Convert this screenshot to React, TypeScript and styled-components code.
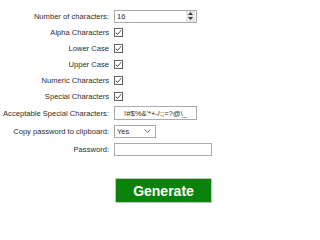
import * as React from 'react';
import styled, { createGlobalStyle } from 'styled-components';

const GlobalStyle = createGlobalStyle`
  html, body {
    margin: 0;
    padding: 0;
    background: #ffffff;
  }
  body {
    font-family: 'Liberation Sans', Arial, sans-serif;
  }
`;

const Form = styled.div`
  width: 223px;
  height: 213px;
  box-sizing: border-box;
  padding-top: 8px;
  display: grid;
  grid-template-columns: 110px 1fr;
  grid-template-rows: 16px 16px 16px 16px 16px 16px 18px 18px 19px;
  column-gap: 4px;
  align-items: center;
  align-content: start;
  background: #ffffff;
`;

const Label = styled.div`
  font-size: 7.6px;
  color: #2b2b2b;
  text-align: right;
  white-space: nowrap;
  padding-right: 1px;
`;

const Field = styled.div<{ width: number; height?: number }>`
  width: ${(p) => p.width}px;
  height: ${(p) => p.height ?? 13}px;
  box-sizing: border-box;
  border: 1px solid #ababab;
  background: #ffffff;
  display: flex;
  align-items: center;
  font-size: 7.6px;
  color: #2b2b2b;
`;

const FieldText = styled.span<{ center?: boolean }>`
  flex-grow: 1;
  padding-left: ${(p) => (p.center ? 0 : 2)}px;
  text-align: ${(p) => (p.center ? 'center' : 'left')};
  white-space: nowrap;
  overflow: hidden;
`;

const Spinner = styled.div`
  width: 9px;
  height: 11px;
  margin-right: 1px;
  background: #e6e6e6;
  display: flex;
  flex-direction: column;
  align-items: center;
  justify-content: space-evenly;
`;

const Chevron = styled.span`
  width: 10px;
  display: flex;
  justify-content: center;
  margin-right: 3px;
`;

const Box = styled.div`
  width: 9px;
  height: 9px;
  box-sizing: border-box;
  border: 1px solid #5e5e5e;
  background: #ffffff;
  display: flex;
  align-items: center;
  justify-content: center;
`;

const ButtonCell = styled.div`
  grid-column: 2;
  display: flex;
  margin-top: 19px;
`;

const GenerateButton = styled.button`
  width: 97px;
  height: 25px;
  box-sizing: border-box;
  border: 1px solid #c4c4c4;
  background: #0b820b;
  color: #ffffff;
  font-family: 'Liberation Sans', Arial, sans-serif;
  font-weight: bold;
  font-size: 14px;
  padding: 0;
  margin-left: 1px;
  cursor: pointer;
`;

const Check = () => (
  <Box>
    <svg width="7" height="7" viewBox="0 0 7 7">
      <path d="M0.8 3.6 L2.7 5.4 L6.2 1.2" fill="none" stroke="#4a4a4a" strokeWidth="1" />
    </svg>
  </Box>
);

const checks = [
  'Alpha Characters',
  'Lower Case',
  'Upper Case',
  'Numeric Characters',
  'Special Characters',
];

export default function App() {
  return (
    <>
      <GlobalStyle />
      <Form>
        <Label>Number of characters:</Label>
        <Field width={83}>
          <FieldText>16</FieldText>
          <Spinner>
            <svg width="5" height="3" viewBox="0 0 5 3">
              <path d="M0 3 L2.5 0 L5 3 Z" fill="#3a3a3a" />
            </svg>
            <svg width="5" height="3" viewBox="0 0 5 3">
              <path d="M0 0 L2.5 3 L5 0 Z" fill="#3a3a3a" />
            </svg>
          </Spinner>
        </Field>

        {checks.map((c) => (
          <React.Fragment key={c}>
            <Label>{c}</Label>
            <Check />
          </React.Fragment>
        ))}

        <Label>Acceptable Special Characters:</Label>
        <Field width={83} height={14}>
          <FieldText center>{"!#$%&'*+-/:;=?@\\_"}</FieldText>
        </Field>

        <Label>Copy password to clipboard:</Label>
        <Field width={42}>
          <FieldText>Yes</FieldText>
          <Chevron>
            <svg width="7" height="4" viewBox="0 0 7 4">
              <path d="M0.5 0.5 L3.5 3.3 L6.5 0.5" fill="none" stroke="#555" strokeWidth="0.9" />
            </svg>
          </Chevron>
        </Field>

        <Label>Password:</Label>
        <Field width={98}>
          <FieldText />
        </Field>

        <ButtonCell>
          <GenerateButton>Generate</GenerateButton>
        </ButtonCell>
      </Form>
    </>
  );
}
